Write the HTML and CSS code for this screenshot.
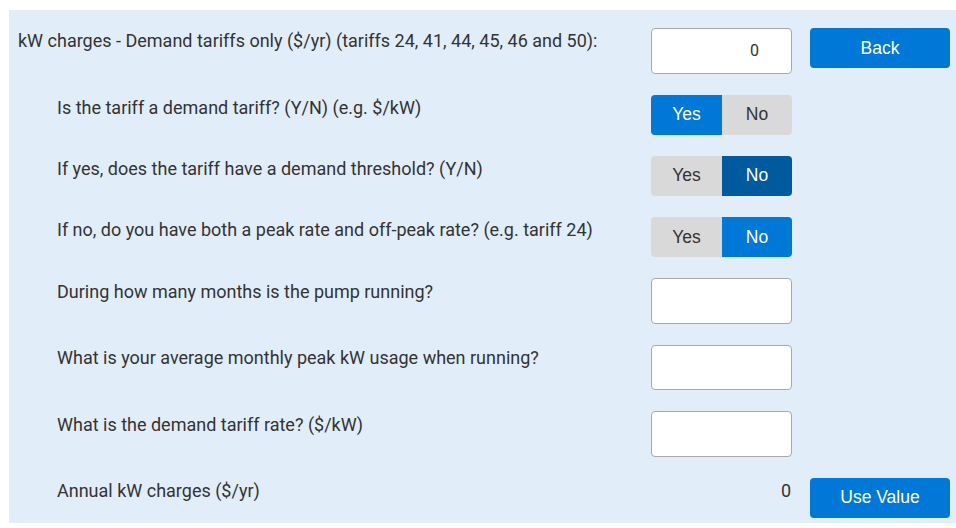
FILE: index.html
```html
<!DOCTYPE html>
<html lang="en">
<head>
<meta charset="utf-8">
<title>kW charges</title>
<link rel="stylesheet" href="styles.css">
</head>
<body>
<div class="panel">
  <div class="row">
    <div class="label">kW charges - Demand tariffs only ($/yr) (tariffs 24, 41, 44, 45, 46 and 50):</div>
    <div class="control"><input class="field field-value" type="text" value="0"></div>
    <div class="action"><button class="btn">Back</button></div>
  </div>
  <div class="row">
    <div class="label sub">Is the tariff a demand tariff? (Y/N) (e.g. $/kW)</div>
    <div class="control">
      <div class="toggle"><span class="seg seg-yes on">Yes</span><span class="seg seg-no">No</span></div>
    </div>
    <div class="action"></div>
  </div>
  <div class="row">
    <div class="label sub">If yes, does the tariff have a demand threshold? (Y/N)</div>
    <div class="control">
      <div class="toggle"><span class="seg seg-yes">Yes</span><span class="seg seg-no on-dark">No</span></div>
    </div>
    <div class="action"></div>
  </div>
  <div class="row">
    <div class="label sub">If no, do you have both a peak rate and off-peak rate? (e.g. tariff 24)</div>
    <div class="control">
      <div class="toggle"><span class="seg seg-yes">Yes</span><span class="seg seg-no on">No</span></div>
    </div>
    <div class="action"></div>
  </div>
  <div class="row">
    <div class="label sub">During how many months is the pump running?</div>
    <div class="control"><input class="field" type="text"></div>
    <div class="action"></div>
  </div>
  <div class="row">
    <div class="label sub">What is your average monthly peak kW usage when running?</div>
    <div class="control"><input class="field" type="text"></div>
    <div class="action"></div>
  </div>
  <div class="row">
    <div class="label sub">What is the demand tariff rate? ($/kW)</div>
    <div class="control"><input class="field" type="text"></div>
    <div class="action"></div>
  </div>
  <div class="row">
    <div class="label sub">Annual kW charges ($/yr)</div>
    <div class="control result">0</div>
    <div class="action"><button class="btn">Use Value</button></div>
  </div>
</div>
</body>
</html>
```
FILE: styles.css
```css
html, body {
  margin: 0;
  padding: 0;
  background: #ffffff;
}

body {
  font-family: Roboto, "Noto Sans", Arial, sans-serif;
  font-size: 18px;
  color: #333333;
  overflow: hidden;
}

.panel {
  margin: 10px 0 0 9px;
  padding: 18px 6px 5px 9px;
  background: #e1eefa;
  display: flex;
  flex-direction: column;
  gap: 21px;
}

.row {
  display: flex;
  align-items: flex-start;
}

.label {
  flex: 1;
  padding-top: 2.3px;
  line-height: normal;
}

.label.sub {
  padding-left: 39px;
}

.control {
  width: 141px;
  flex: none;
  margin-right: 18px;
}

.action {
  width: 140px;
  flex: none;
}

.field {
  box-sizing: border-box;
  display: block;
  width: 141px;
  height: 45.5px;
  margin: 0;
  border: 1px solid #a9a9a9;
  border-radius: 4px;
  background: #ffffff;
  font-family: Roboto, "Noto Sans", Arial, sans-serif;
  font-size: 16px;
  color: #333333;
  padding: 0 8px;
  outline: none;
}

.field-value {
  text-align: right;
  padding-right: 32px;
}

.toggle {
  display: flex;
  height: 40.33px;
  border-radius: 4px;
  overflow: hidden;
  font-family: "Liberation Sans", Arial, sans-serif;
  font-size: 17.5px;
}

.seg {
  display: flex;
  align-items: center;
  justify-content: center;
  background: #d9d9d9;
  color: #333333;
}

.seg-yes {
  width: 71px;
}

.seg-no {
  width: 70px;
}

.seg.on {
  background: #0078d7;
  color: #ffffff;
}

.seg.on-dark {
  background: #005a9e;
  color: #ffffff;
}

.result {
  text-align: right;
  padding-top: 2.3px;
  line-height: normal;
  box-sizing: border-box;
  padding-right: 1px;
}

.btn {
  display: block;
  width: 140px;
  height: 40px;
  margin: 0;
  border: none;
  border-radius: 4px;
  background: #0078d7;
  color: #ffffff;
  font-family: "Liberation Sans", Arial, sans-serif;
  font-size: 17.5px;
  padding: 0;
  cursor: pointer;
}
```
